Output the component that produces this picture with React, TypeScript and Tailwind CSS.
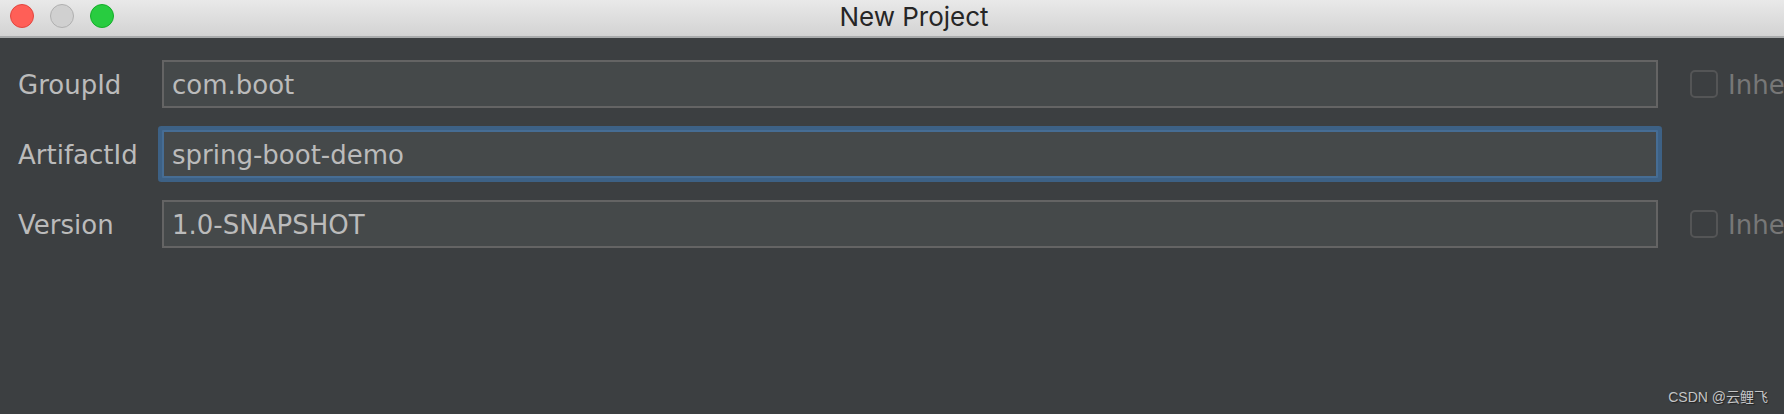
import { useState } from 'react';
import clsx from 'clsx';

type Field = {
  id: string;
  label: string;
  value: string;
  inheritable: boolean;
};

const initialFields: Field[] = [
  { id: 'groupId', label: 'GroupId', value: 'com.boot', inheritable: true },
  { id: 'artifactId', label: 'ArtifactId', value: 'spring-boot-demo', inheritable: false },
  { id: 'version', label: 'Version', value: '1.0-SNAPSHOT', inheritable: true },
];

export default function App() {
  const [fields, setFields] = useState(initialFields);
  const [active, setActive] = useState('artifactId');

  const updateField = (id: string, value: string) => {
    setFields(fields.map((field) => (field.id === id ? { ...field, value } : field)));
  };

  return (
    <div className="flex min-h-screen flex-col overflow-hidden bg-[#3c3f41] font-['DejaVu_Sans','Noto_Sans_CJK_SC',sans-serif]">
      <TitleBar title="New Project" />

      {/* Coordinates form */}
      <form className="flex flex-1 flex-col gap-[22px] overflow-hidden pt-[22px] pl-[18px]">
        {fields.map((field) => (
          <div key={field.id} className="grid grid-cols-[144px_minmax(0,1fr)_94px] items-center">
            <label htmlFor={field.id} className="pt-0.5 text-[26px] leading-8 text-[#bbbbbb]">
              {field.label}
            </label>
            <input
              id={field.id}
              type="text"
              value={field.value}
              onChange={(e) => updateField(field.id, e.target.value)}
              onFocus={() => setActive(field.id)}
              className={clsx(
                'mr-8 h-12 border-2 bg-[#45494a] px-2 pt-0.5 text-[26px] leading-8 text-[#bbbbbb] outline-none',
                active === field.id
                  ? 'rounded-[1px] border-[#466d94] ring-4 ring-[#3d6185]'
                  : 'border-[#646464]',
              )}
            />
            {field.inheritable && <InheritedOption id={`${field.id}-inherited`} />}
          </div>
        ))}
      </form>

      <footer className="flex justify-end px-4 pb-[7px] font-['Liberation_Sans','Noto_Sans_CJK_SC',sans-serif] text-sm leading-5 text-[#c4c5c6] text-shadow-[1px_1px_1px_#222222]">
        CSDN @云鲤飞
      </footer>
    </div>
  );
}

// The bar runs past the right edge, so the title centres on the full dialog width
function TitleBar({ title }: { title: string }) {
  return (
    <header className="-mr-11 grid h-[38px] grid-cols-[1fr_auto_1fr] items-start border-b-2 border-[#a9abac] bg-linear-to-b from-[#e9e9e9] to-[#d3d3d3] px-[10px]">
      <div className="flex gap-4 pt-1">
        <button type="button" aria-label="Close" className="size-6 rounded-full border border-[#e2463f] bg-[#ff5f57]" />
        <button type="button" aria-label="Minimize" disabled className="size-6 rounded-full border border-[#b0b0b0] bg-[#d0d0d0]" />
        <button type="button" aria-label="Zoom" className="size-6 rounded-full border border-[#14ae29] bg-[#28cc40]" />
      </div>
      <h1 className="font-['Inter',sans-serif] text-[26px] leading-[34px] text-[#262626]">{title}</h1>
    </header>
  );
}

function InheritedOption({ id }: { id: string }) {
  return (
    <div className="flex items-center gap-2.5 overflow-hidden whitespace-nowrap">
      <input
        id={id}
        type="checkbox"
        disabled
        className="size-7 shrink-0 appearance-none rounded-[5px] border-2 border-[#545556]"
      />
      <label htmlFor={id} className="pt-0.5 text-[26px] leading-8 text-[#777777]">
        Inherited
      </label>
    </div>
  );
}
